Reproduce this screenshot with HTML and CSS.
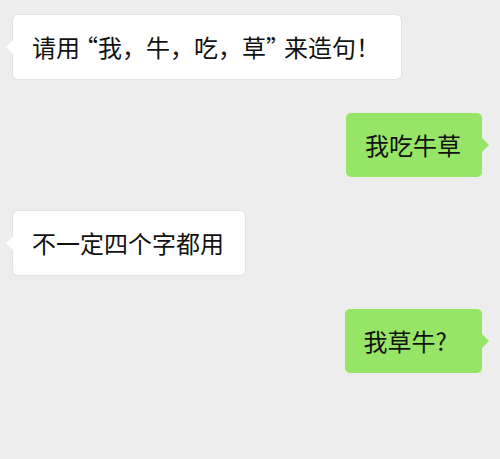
FILE: index.html
```html
<!DOCTYPE html>
<html lang="zh-CN">
<head>
    <meta charset="UTF-8">
    <meta name="viewport" content="width=device-width, initial-scale=1.0">
    <title>聊天</title>
    <link rel="stylesheet" href="styles.css">
</head>
<body>

    <div class="chat">
        <div class="row left">
            <div class="bubble">请用<span class="q-open">“</span>我，牛，吃，草<span class="q-close">”</span>来造句！</div>
        </div>
        <div class="row right">
            <div class="bubble">我吃牛草</div>
        </div>
        <div class="row left">
            <div class="bubble">不一定四个字都用</div>
        </div>
        <div class="row right">
            <div class="bubble wide">我草牛?</div>
        </div>
    </div>

</body>
</html>
```

FILE: styles.css
```css
body {
    margin: 0;
    padding: 0;
    background-color: #ededed;
    font-family: "Noto Sans CJK SC", "Noto Sans", sans-serif;
    color: #111111;
}
.chat {
    display: flex;
    flex-direction: column;
    gap: 34px;
    padding: 15px 18px 0 13px;
}
.row {
    display: flex;
}
.row.left {
    justify-content: flex-start;
}
.row.right {
    justify-content: flex-end;
}
.bubble {
    position: relative;
    font-size: 24px;
    line-height: 24px;
    padding: 20px 21px 20px 19px;
    border-radius: 5px;
    white-space: nowrap;
}
.bubble.wide {
    padding-right: 35px;
}
/* half-width quotes, a little room on the outer side */
.q-open, .q-close {
    font-feature-settings: "halt";
}
.q-open {
    margin-left: 6px;
}
.q-close {
    margin-right: 6px;
}
.left .bubble {
    background-color: #ffffff;
    box-shadow: 0 0 0 1px #e3e3e3;
}
.right .bubble {
    background-color: #97e566;
}
.bubble::before {
    content: "";
    position: absolute;
    top: 25px;
    width: 0;
    height: 0;
    border-top: 7px solid transparent;
    border-bottom: 7px solid transparent;
}
.left .bubble::before {
    left: -7px;
    border-right: 7px solid #ffffff;
}
.right .bubble::before {
    right: -7px;
    border-left: 7px solid #97e566;
}
```
